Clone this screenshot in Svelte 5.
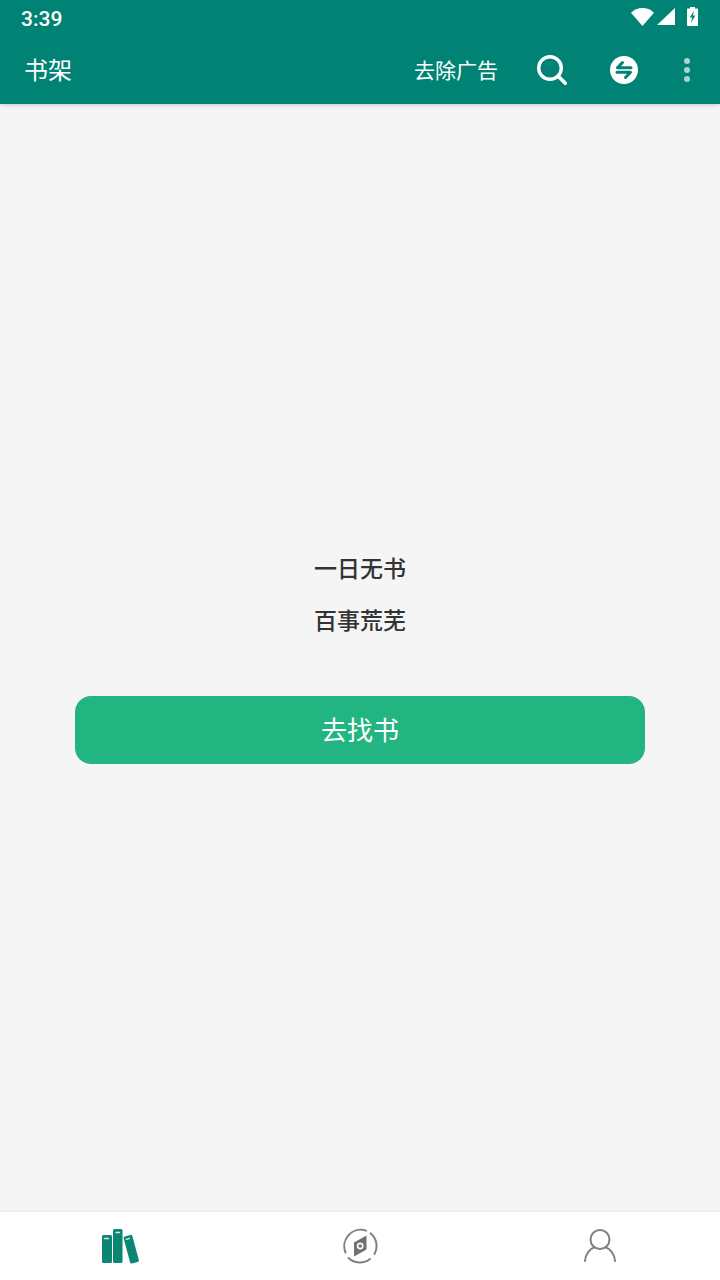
<script lang="ts">
	// Empty bookshelf screen: app bar, empty-state message and bottom tabs.
	const emptyLines = ['一日无书', '百事荒芜'];
</script>

<div class="screen">
	<header class="appbar">
		<div class="status">
			<span class="time">3:39</span>
			<div class="status-icons">
				<svg width="23" height="18" viewBox="0 0 23 18" aria-hidden="true">
					<path d="M0 4.800C3 1.800 7 0 11.500 0S20 1.800 23 4.800L11.500 18z" fill="#fff" />
				</svg>
				<svg width="18" height="17" viewBox="0 0 18 17" aria-hidden="true">
					<path d="M18 0V17H0z" fill="#fff" />
				</svg>
				<svg class="battery" width="11" height="19" viewBox="0 0 11 19" aria-hidden="true">
					<path d="M3 0h5v1.500h2.200a.8.8 0 0 1 .8.8v15.900a.8.8 0 0 1-.8.800H.8a.8.8 0 0 1-.8-.8V2.300a.8.8 0 0 1 .8-.8H3z" fill="#fff" />
					<path d="M7.200 3.500L2.800 10.500H5.200L4 16L8.300 8.500H5.900z" fill="#008375" />
				</svg>
			</div>
		</div>
		<div class="toolbar">
			<h1>书架</h1>
			<span class="action-text">去除广告</span>
			<svg class="search" width="30" height="30" viewBox="0 0 30 30" aria-hidden="true">
				<circle cx="13" cy="13" r="11.300" fill="none" stroke="#fff" stroke-width="3.400" />
				<path d="M21.500 21.500L28.300 28.300" stroke="#fff" stroke-width="3.600" stroke-linecap="round" />
			</svg>
			<svg class="swap" width="28" height="28" viewBox="0 0 28 28" aria-hidden="true">
				<circle cx="14" cy="14" r="14" fill="#fff" />
				<path d="M21 11.800H7.500L12.500 6.500" fill="none" stroke="#008375" stroke-width="3" stroke-linecap="round" stroke-linejoin="round" />
				<path d="M7 16.200H20.500L15.500 21.500" fill="none" stroke="#008375" stroke-width="3" stroke-linecap="round" stroke-linejoin="round" />
			</svg>
			<div class="more" aria-hidden="true">
				<i></i><i></i><i></i>
			</div>
		</div>
	</header>

	<main class="empty">
		{#each emptyLines as line}
			<p>{line}</p>
		{/each}
		<button type="button">去找书</button>
	</main>

	<nav class="tabs">
		<div class="tab">
			<svg width="38" height="36" viewBox="0 0 38 36" aria-hidden="true">
				<rect x="1" y="7" width="10" height="28" rx="1.500" fill="#0b8672" />
				<rect x="12" y="1" width="9.500" height="34" rx="1.500" fill="#0b8672" />
				<rect x="25.700" y="7" width="9" height="28" rx="1.500" fill="#0b8672" transform="rotate(-15 31 21)" />
				<path d="M3.500 10.500H7.500M15 4.500h3.500" stroke="#cfe8e3" stroke-width="1.400" stroke-linecap="round" />
				<path d="M25.300 11.300L28.500 10.400" stroke="#cfe8e3" stroke-width="1.400" stroke-linecap="round" />
			</svg>
		</div>
		<div class="tab">
			<svg width="36" height="36" viewBox="0 0 36 36" aria-hidden="true">
				<path d="M3.500 24.500A16.500 16.500 0 0 1 24 2.600M28.500 5.300A16.500 16.500 0 0 1 32.500 26M28 31A16.500 16.500 0 0 1 6.500 30" fill="none" stroke="#808080" stroke-width="2" stroke-linecap="round" />
				<path d="M12 14.500L24.500 7.500V21.500L12 28.500z" fill="#707070" />
				<circle cx="18.200" cy="18" r="2.600" fill="none" stroke="#fff" stroke-width="1.600" />
			</svg>
		</div>
		<div class="tab">
			<svg width="34" height="36" viewBox="0 0 34 36" aria-hidden="true">
				<circle cx="17" cy="11.500" r="9.500" fill="none" stroke="#808080" stroke-width="2" />
				<path d="M2 33C2.500 25.500 7.500 20.500 11 19.500M32 33C31.500 25.500 26.500 20.500 23 19.500" fill="none" stroke="#808080" stroke-width="2" stroke-linecap="round" />
			</svg>
		</div>
	</nav>
</div>

<style>
	:global(body) {
		margin: 0;
		background: #f5f5f5;
	}

	.screen {
		display: flex;
		flex-direction: column;
		height: 1280px;
		font-family: 'Noto Sans CJK SC', 'Noto Sans', sans-serif;
	}

	.appbar {
		height: 104px;
		flex: none;
		background: #008375;
		color: #fff;
		box-shadow: 0 1px 4px rgba(0, 0, 0, 0.18);
		position: relative;
	}

	.status {
		display: flex;
		align-items: flex-start;
		justify-content: space-between;
		height: 34px;
		padding: 0 22px 0 21px;
		box-sizing: border-box;
	}

	.time {
		font: 500 21px/1 Roboto, sans-serif;
		padding-top: 9px;
	}

	.status-icons {
		display: flex;
		align-items: flex-start;
		gap: 3px;
		padding-top: 8px;
	}

	.battery {
		margin: -1px 0 0 9px;
	}

	.toolbar {
		display: flex;
		align-items: center;
		height: 70px;
		padding-left: 24px;
	}

	h1 {
		margin: 0 auto 0 0;
		font-size: 24px;
		font-weight: 400;
		line-height: 1;
	}

	.action-text {
		font-size: 21px;
		line-height: 1;
	}

	.search {
		margin: 2px 0 0 39px;
	}

	.swap {
		margin: 2px 0 0 43px;
	}

	.more {
		display: flex;
		flex-direction: column;
		gap: 3px;
		margin: 2px 30px 0 46px;
	}

	.more i {
		width: 6px;
		height: 6px;
		border-radius: 50%;
		background: #a6d6cf;
	}

	.empty {
		flex: 1;
		display: flex;
		flex-direction: column;
		align-items: center;
		padding-top: 446px;
		box-sizing: border-box;
	}

	p {
		margin: 0 0 18px;
		font-size: 23px;
		font-weight: 500;
		line-height: 34px;
		color: #333;
	}

	button {
		width: 570px;
		height: 68px;
		margin-top: 42px;
		padding: 0 0 2px;
		border: 0;
		border-radius: 16px;
		background: #22b582;
		color: #fff;
		font: 400 26px/1 'Noto Sans CJK SC', sans-serif;
	}

	.tabs {
		display: grid;
		grid-template-columns: repeat(3, 1fr);
		height: 68px;
		flex: none;
		background: #fff;
		box-shadow: 0 -1px 2px rgba(0, 0, 0, 0.05);
	}

	.tab {
		display: flex;
		justify-content: center;
		align-items: flex-start;
		padding-top: 16px;
	}
</style>
